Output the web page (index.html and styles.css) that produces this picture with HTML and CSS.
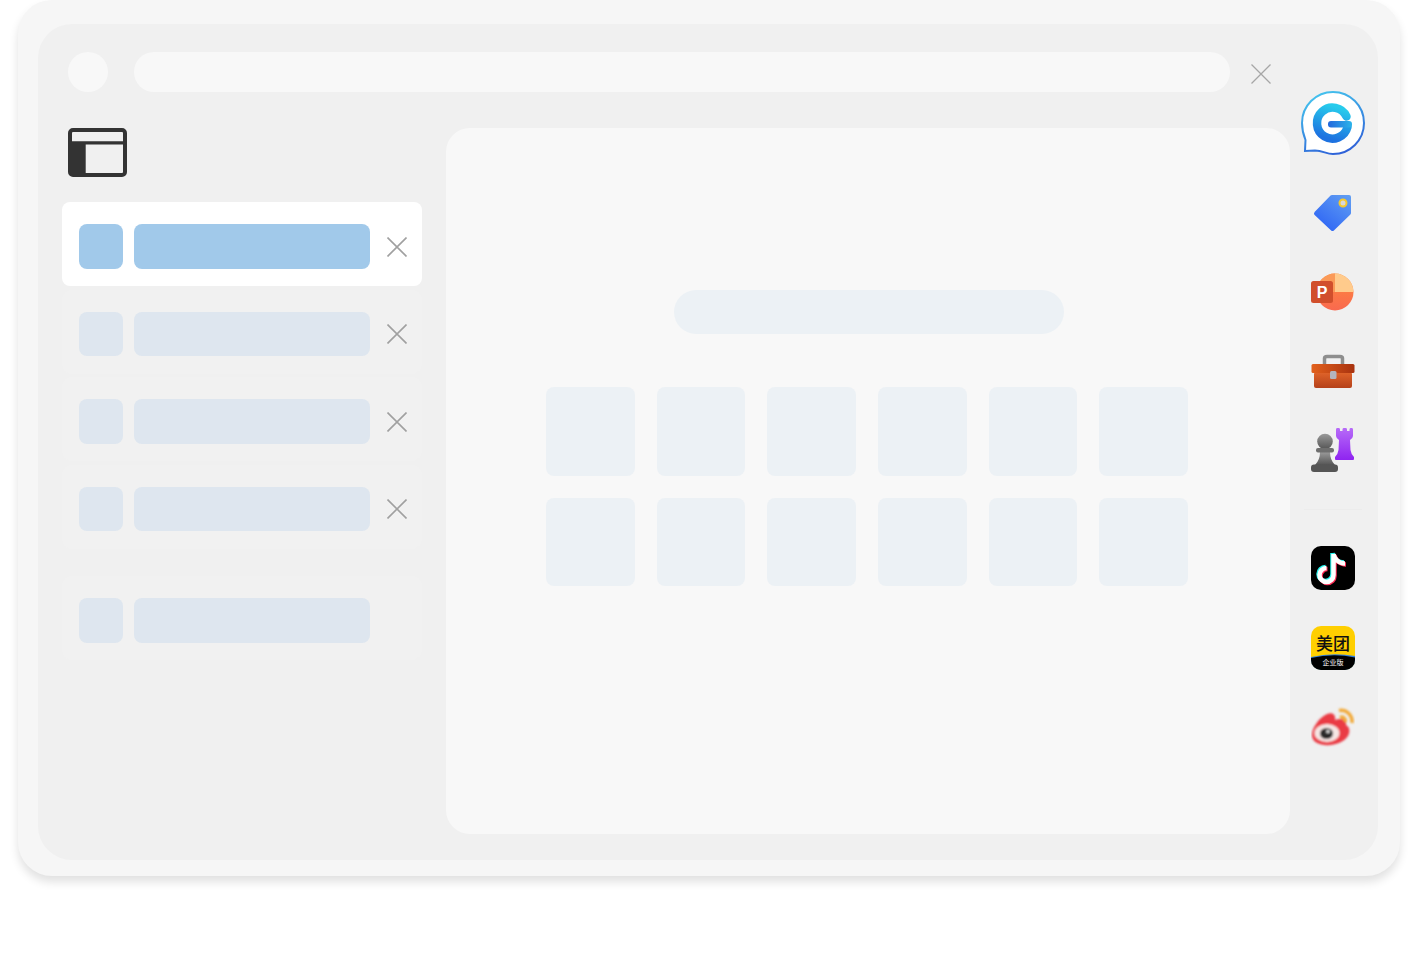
FILE: index.html
```html
<!DOCTYPE html>
<html lang="en">
<head>
    <meta charset="UTF-8">
    <meta name="viewport" content="width=device-width, initial-scale=1.0">
    <title>Browser tabs</title>
    <link rel="stylesheet" href="styles.css">
</head>
<body>
    <div class="frame">
        <div class="window">
            <div class="window-main">
                <div class="topbar">
                    <div class="top-dot"></div>
                    <div class="top-pill"></div>
                    <svg class="top-close" viewBox="0 0 20 20"><path d="M0.5 0.5L19.5 19.5M19.5 0.5L0.5 19.5"/></svg>
                </div>
                <div class="content">
                    <div class="sidebar">
                        <svg class="layout-icon" viewBox="0 0 59 49">
                            <rect x="2" y="2" width="55" height="45" rx="3" fill="#f0f0f0" stroke="#333" stroke-width="4"/>
                            <path d="M2 13.3H57V16.6H17.7V47H5A3 3 0 0 1 2 44Z" fill="#333"/>
                        </svg>
                        <div class="row row-active">
                            <div class="row-square"></div>
                            <div class="row-bar"></div>
                            <svg class="row-close" viewBox="0 0 20 20"><path d="M0.5 0.5L19.5 19.5M19.5 0.5L0.5 19.5"/></svg>
                        </div>
                        <div class="row">
                            <div class="row-square"></div>
                            <div class="row-bar"></div>
                            <svg class="row-close" viewBox="0 0 20 20"><path d="M0.5 0.5L19.5 19.5M19.5 0.5L0.5 19.5"/></svg>
                        </div>
                        <div class="row">
                            <div class="row-square"></div>
                            <div class="row-bar"></div>
                            <svg class="row-close" viewBox="0 0 20 20"><path d="M0.5 0.5L19.5 19.5M19.5 0.5L0.5 19.5"/></svg>
                        </div>
                        <div class="row">
                            <div class="row-square"></div>
                            <div class="row-bar"></div>
                            <svg class="row-close" viewBox="0 0 20 20"><path d="M0.5 0.5L19.5 19.5M19.5 0.5L0.5 19.5"/></svg>
                        </div>
                        <div class="row row-last">
                            <div class="row-square"></div>
                            <div class="row-bar"></div>
                        </div>
                    </div>
                    <div class="panel">
                        <div class="panel-pill"></div>
                        <div class="tiles">
                            <div class="tile"></div>
                            <div class="tile"></div>
                            <div class="tile"></div>
                            <div class="tile"></div>
                            <div class="tile"></div>
                            <div class="tile"></div>
                            <div class="tile"></div>
                            <div class="tile"></div>
                            <div class="tile"></div>
                            <div class="tile"></div>
                            <div class="tile"></div>
                            <div class="tile"></div>
                        </div>
                    </div>
                </div>
            </div>
            <div class="rail">
                <!-- chat bubble G -->
                <svg class="icon-g" viewBox="0 0 64 65">
                    <defs>
                        <linearGradient id="gRing" x1="0.2" y1="0" x2="0.6" y2="1">
                            <stop offset="0" stop-color="#45c6ee"/>
                            <stop offset="1" stop-color="#2f62d8"/>
                        </linearGradient>
                        <linearGradient id="gLetter" x1="0.7" y1="0" x2="0.4" y2="1">
                            <stop offset="0" stop-color="#27cbec"/>
                            <stop offset="1" stop-color="#1d72e0"/>
                        </linearGradient>
                        <linearGradient id="gBar" x1="0" y1="0" x2="1" y2="0">
                            <stop offset="0" stop-color="#2468dc"/>
                            <stop offset="1" stop-color="#2bb4ea"/>
                        </linearGradient>
                    </defs>
                    <path d="M32 1A31 31 0 1 1 32 63C25 63 22 59.500 14 59.500L4 60L4.500 49C2.500 44 1 38 1 32A31 31 0 0 1 32 1Z" fill="#fff" stroke="url(#gRing)" stroke-width="2"/>
                    <path d="M45.500 25.500A15.500 15.500 0 1 0 46.500 36" fill="none" stroke="url(#gLetter)" stroke-width="8.500" stroke-linecap="round"/>
                    <rect x="27" y="30" width="24" height="6.500" rx="3" fill="url(#gBar)"/>
                </svg>
                <!-- tag -->
                <svg class="icon" viewBox="0 0 44 44">
                    <defs>
                        <linearGradient id="tagFill" x1="1" y1="0" x2="0.2" y2="1">
                            <stop offset="0" stop-color="#5f9cf2"/>
                            <stop offset="1" stop-color="#2f66f5"/>
                        </linearGradient>
                    </defs>
                    <path d="M21 6H38V22L21.500 38L5 22.500Z" fill="url(#tagFill)" stroke="url(#tagFill)" stroke-width="4" stroke-linejoin="round"/>
                    <circle cx="32" cy="12" r="3.500" fill="#d8d8d8" stroke="#f5c92c" stroke-width="2"/>
                </svg>
                <!-- slides -->
                <svg class="icon" viewBox="0 0 44 44">
                    <defs>
                        <linearGradient id="pptLow" x1="0" y1="0" x2="0" y2="1">
                            <stop offset="0" stop-color="#ff8a3c"/>
                            <stop offset="1" stop-color="#f9694f"/>
                        </linearGradient>
                    </defs>
                    <circle cx="24" cy="22" r="18.500" fill="url(#pptLow)"/>
                    <path d="M24 3.500A18.500 18.500 0 0 0 5.500 22H24Z" fill="#fb9a58"/>
                    <path d="M24 3.500A18.500 18.500 0 0 1 42.500 22H24Z" fill="#ffcb8c"/>
                    <rect x="0" y="11" width="22" height="22" rx="2.500" fill="#d14f2c"/>
                    <text class="ppt-letter" x="11" y="28" text-anchor="middle">P</text>
                </svg>
                <!-- toolbox -->
                <svg class="icon" viewBox="0 0 44 44">
                    <defs>
                        <linearGradient id="lidFill" x1="0" y1="0" x2="1" y2="0">
                            <stop offset="0" stop-color="#e2601c"/>
                            <stop offset="1" stop-color="#a8320f"/>
                        </linearGradient>
                        <linearGradient id="boxFill" x1="0" y1="0" x2="0" y2="1">
                            <stop offset="0" stop-color="#e0642a"/>
                            <stop offset="1" stop-color="#b5411a"/>
                        </linearGradient>
                    </defs>
                    <path d="M13.500 16V9.500Q13.500 7.500 16 7.500H29Q31.500 7.500 31.500 9.500V16" fill="none" stroke="#8e8e8e" stroke-width="3.500"/>
                    <rect x="3" y="23" width="38" height="16" rx="2" fill="url(#boxFill)"/>
                    <rect x="0.500" y="15" width="43" height="9" rx="1.500" fill="url(#lidFill)"/>
                    <rect x="19" y="22" width="6.500" height="8" rx="1.500" fill="#b4b4bc"/>
                </svg>
                <!-- chess pieces -->
                <svg class="icon" viewBox="0 0 44 44">
                    <defs>
                        <linearGradient id="pawnFill" x1="0" y1="0" x2="0" y2="1">
                            <stop offset="0" stop-color="#9a9a9a"/>
                            <stop offset="1" stop-color="#555"/>
                        </linearGradient>
                        <linearGradient id="rookFill" x1="0" y1="0" x2="0" y2="1">
                            <stop offset="0" stop-color="#b76bf8"/>
                            <stop offset="1" stop-color="#8f24f0"/>
                        </linearGradient>
                    </defs>
                    <path d="M25 1.500Q25 0 26 0H28Q29 0 29 1.500V3H31.500V1.500Q31.500 0 32.500 0H35Q36 0 36 1.500V3H38.500V1.500Q38.500 0 39.500 0H41Q42 0 42 1.500V8Q42 10 39 12L39.500 22Q40 26 43 29V31Q43 32 42 32H25Q24 32 24 31V29Q27 26 27.500 22L28 12Q25 10 25 8Z" fill="url(#rookFill)"/>
                    <circle cx="14" cy="13.500" r="7.800" fill="url(#pawnFill)"/>
                    <path d="M9 24H19Q19 32 24 37H4Q9 32 9 24Z" fill="url(#pawnFill)"/>
                    <rect x="5" y="20" width="18" height="4.500" rx="2" fill="#6f6f6f"/>
                    <rect x="0" y="36.500" width="27" height="7.500" rx="3" fill="#555"/>
                </svg>
                <div class="rail-divider"></div>
                <!-- tiktok -->
                <svg class="icon" viewBox="0 0 44 44">
                    <rect width="44" height="44" rx="10" fill="#000"/>
                    <g fill="none" stroke-width="4.500">
                        <path d="M21.500 7V28A7 7 0 1 1 14.500 21M21.500 7C22 12 27 16.500 33 16.500" stroke="#25f4ee"/>
                        <path d="M23.500 9V30A7 7 0 1 1 16.500 23M23.500 9C24 14 29 18.500 35 18.500" stroke="#fe2c55"/>
                        <path d="M22.500 8V29A7 7 0 1 1 15.500 22M22.500 8C23 13 28 17.500 34 17.500" stroke="#fff"/>
                    </g>
                </svg>
                <!-- meituan -->
                <svg class="icon icon-mt" viewBox="0 0 44 44">
                    <defs>
                        <clipPath id="mtClip"><rect width="44" height="44" rx="10"/></clipPath>
                    </defs>
                    <g clip-path="url(#mtClip)">
                        <rect width="44" height="44" fill="#ffcf00"/>
                        <path d="M0 31Q22 26 44 30V44H0Z" fill="#2f7fe0"/>
                        <path d="M0 32Q22 27 44 31.500V44H0Z" fill="#000"/>
                    </g>
                    <text class="mt-name" x="22" y="24" text-anchor="middle">美团</text>
                    <text class="mt-sub" x="22" y="39" text-anchor="middle">企业版</text>
                </svg>
                <!-- weibo -->
                <svg class="icon" viewBox="0 0 44 44">
                    <defs>
                        <filter id="soft"><feGaussianBlur stdDeviation="0.800"/></filter>
                    </defs>
                    <g filter="url(#soft)">
                        <path d="M1 30C1 22 9 12 16 9C21 7 25 9 24 15C29 13 36 14 35 20C41 23 39 33 30 37C21 42 1 42 1 30Z" fill="#ea3a44"/>
                        <ellipse cx="16" cy="28" rx="12.500" ry="9" fill="#f6e6e4"/>
                        <ellipse cx="15.500" cy="28.500" rx="6.500" ry="5.500" fill="#2a2a2a"/>
                        <circle cx="17" cy="26.500" r="1.800" fill="#ddd"/>
                        <path d="M28 5.500C35 4 42 10 41 18" fill="none" stroke="#f2aa3a" stroke-width="3.500"/>
                        <path d="M29 12.500C32 11 35 14 34.500 17" fill="none" stroke="#f2aa3a" stroke-width="3.500"/>
                    </g>
                </svg>
            </div>
        </div>
    </div>
</body>
</html>
```

FILE: styles.css
```css
html, body {
    margin: 0;
    background-color: #fff;
}
body {
    height: 968px;
    overflow: hidden;
    font-family: "Liberation Sans", "Noto Sans CJK SC", sans-serif;
}
.frame {
    box-sizing: border-box;
    width: 1382px;
    height: 876px;
    margin-left: 18px;
    padding: 24px 22px 16px 20px;
    background-color: #f6f6f6;
    border-radius: 34px;
    box-shadow: 0 6px 10px rgba(0, 0, 0, 0.12);
}
.window {
    display: flex;
    height: 100%;
    background-color: #f0f0f0;
    border-radius: 34px;
}
.window-main {
    box-sizing: border-box;
    width: 1252px;
    padding: 28px 0 26px 24px;
    display: flex;
    flex-direction: column;
}

/* top bar */
.topbar {
    display: flex;
    padding: 0 19px 0 6px;
}
.top-dot {
    flex: none;
    width: 40px;
    height: 40px;
    margin-right: 26px;
    background-color: #f8f8f8;
    border-radius: 50%;
}
.top-pill {
    flex: 1;
    height: 40px;
    background-color: #f8f8f8;
    border-radius: 20px;
}
.top-close {
    flex: none;
    width: 20px;
    height: 20px;
    margin: 12px 0 0 21px;
    stroke: #a6a6a6;
    stroke-width: 1.3;
}

/* sidebar */
.content {
    flex: 1;
    display: flex;
    gap: 24px;
    margin-top: 36px;
}
.sidebar {
    width: 360px;
    flex: none;
    display: flex;
    flex-direction: column;
    gap: 3.5px;
}
.layout-icon {
    width: 59px;
    height: 49px;
    margin: 0 0 21.500px 6px;
}
.row {
    box-sizing: border-box;
    height: 84px;
    padding: 22px 15px 0 17px;
    display: flex;
    background-color: #f1f1f1;
    border-radius: 10px;
}
.row-active {
    background-color: #fff;
    border-radius: 8px;
}
.row-last {
    margin-top: 24px;
}
.row-square {
    flex: none;
    width: 44px;
    height: 44.5px;
    background-color: #dee6ef;
    border-radius: 8px;
}
.row-bar {
    flex: none;
    width: 235.500px;
    height: 44.5px;
    margin-left: 11px;
    background-color: #dee6ef;
    border-radius: 8px;
}
.row-active .row-square,
.row-active .row-bar {
    background-color: #a1c9ea;
}
.row-close {
    flex: none;
    width: 20px;
    height: 20px;
    margin: 12.500px 0 0 17.500px;
    stroke: #a0a0a0;
    stroke-width: 1.6;
}

/* main panel */
.panel {
    width: 844px;
    flex: none;
    box-sizing: border-box;
    padding: 162px 0 0 100px;
    background-color: #f8f8f8;
    border-radius: 24px;
}
.panel-pill {
    width: 390px;
    height: 44px;
    margin-left: 128px;
    background-color: #ecf1f5;
    border-radius: 22px;
}
.tiles {
    width: 642px;
    margin-top: 53px;
    display: grid;
    grid-template-columns: repeat(6, 88.500px);
    gap: 22.2px;
}
.tile {
    aspect-ratio: 1;
    background-color: #ecf1f5;
    border-radius: 8px;
}

/* right icons */
.rail {
    box-sizing: border-box;
    width: 88px;
    flex: none;
    padding: 67px 2px 0 0;
    display: flex;
    flex-direction: column;
    align-items: center;
    gap: 35px;
}
.icon-g {
    width: 64px;
    height: 65px;
    flex: none;
}
.icon {
    width: 44px;
    height: 44px;
    flex: none;
}
.icon-mt {
    margin-top: 1px;
}
.rail-divider {
    width: 58px;
    height: 1px;
    margin: 2px 0 1px;
    background-color: #ececec;
}
.ppt-letter {
    font-family: "Liberation Sans", sans-serif;
    font-size: 16px;
    font-weight: 700;
    fill: #fff;
}
.mt-name {
    font-family: "Noto Sans CJK SC", sans-serif;
    font-size: 17px;
    font-weight: 500;
    fill: #111;
}
.mt-sub {
    font-family: "Noto Sans CJK SC", sans-serif;
    font-size: 7px;
    fill: #fff;
}
```
